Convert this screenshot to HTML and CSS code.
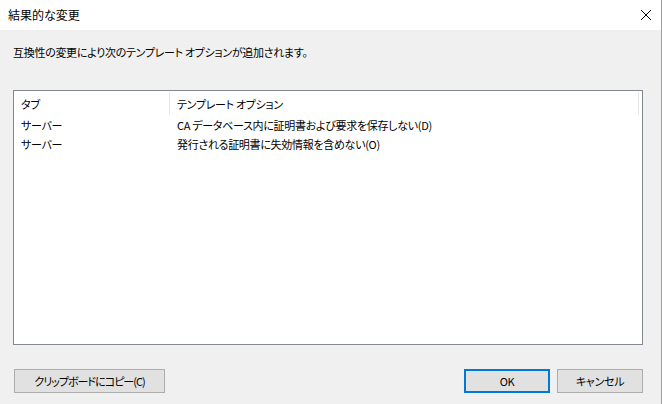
FILE: index.html
```html
<!DOCTYPE html>
<html lang="ja">
<head>
    <meta charset="UTF-8">
    <title>結果的な変更</title>
    <link rel="stylesheet" href="styles.css">
</head>
<body>
    <div class="window">
        <div class="titlebar">
            <span class="title">結果的な変更</span>
            <svg class="close" width="12" height="12" viewBox="0 0 12 12">
                <path d="M1 1L11 11M11 1L1 11" stroke="#000" stroke-width="1" fill="none"/>
            </svg>
        </div>
        <div class="content">
            <p class="message">互換性の変更により次のテンプレート オプションが追加されます。</p>
            <div class="list">
                <div class="row header">
                    <div class="col col-tab">タブ</div>
                    <div class="col col-opt">テンプレート オプション</div>
                    <div class="col col-end"></div>
                </div>
                <div class="row">
                    <div class="col col-tab">サーバー</div>
                    <div class="col col-opt">CA データベース内に証明書および要求を保存しない(D)</div>
                </div>
                <div class="row">
                    <div class="col col-tab">サーバー</div>
                    <div class="col col-opt">発行される証明書に失効情報を含めない(O)</div>
                </div>
            </div>
            <div class="buttons">
                <button class="btn btn-copy">クリップボードにコピー(C)</button>
                <div class="spacer"></div>
                <button class="btn btn-ok">OK</button>
                <button class="btn">キャンセル</button>
            </div>
        </div>
    </div>
</body>
</html>
```

FILE: styles.css
```css
html, body {
    margin: 0;
    padding: 0;
    width: 662px;
    height: 404px;
    overflow: hidden;
}
body {
    font-family: "Noto Sans CJK JP", "Noto Sans", sans-serif;
    font-size: 11px;
    letter-spacing: -0.3px;
    font-feature-settings: "palt";
    color: #000;
    background-color: #f0f0f0;
}
.window {
    width: 662px;
    height: 404px;
    display: flex;
    flex-direction: column;
    box-sizing: border-box;
    border-right: 1px solid #a0a0a0;
}
.titlebar {
    height: 30px;
    background-color: #fff;
    display: flex;
    align-items: center;
    padding-left: 8px;
    padding-right: 9px;
}
.title {
    flex: 1;
    font-size: 12px;
    line-height: 16px;
    letter-spacing: 0;
}
.close {
    display: block;
}
.content {
    flex: 1;
    padding: 14px 0 0 13px;
}
.message {
    margin: 0;
    line-height: 16px;
}
.list {
    margin-top: 30px;
    width: 630px;
    height: 255px;
    box-sizing: border-box;
    border: 1px solid #828790;
    background-color: #fff;
    padding-top: 1px;
}
.row {
    display: flex;
    height: 19px;
    line-height: 19px;
}
.row.header {
    height: 24px;
    line-height: 24px;
}
.col {
    box-sizing: border-box;
    white-space: nowrap;
}
.col-tab {
    width: 156px;
    padding-left: 7px;
}
.col-opt {
    width: 469px;
    padding-left: 7px;
}
.header .col-tab,
.header .col-opt {
    border-right: 1px solid #e5e5e5;
}
.header .col {
    height: 23px;
}
.buttons {
    display: flex;
    margin-top: 24px;
    width: 630px;
    gap: 7px;
}
.spacer {
    flex: 1;
}
.btn {
    font-family: inherit;
    font-size: 11px;
    letter-spacing: -0.3px;
    font-feature-settings: "palt";
    height: 24px;
    width: 86px;
    box-sizing: border-box;
    background-color: #e1e1e1;
    border: 1px solid #adadad;
    color: #000;
    padding: 0;
    margin: 0;
}
.btn-copy {
    width: 151px;
    margin-left: 1px;
    letter-spacing: -1px;
}
.btn-ok {
    border: 2px solid #0078d7;
}
```
